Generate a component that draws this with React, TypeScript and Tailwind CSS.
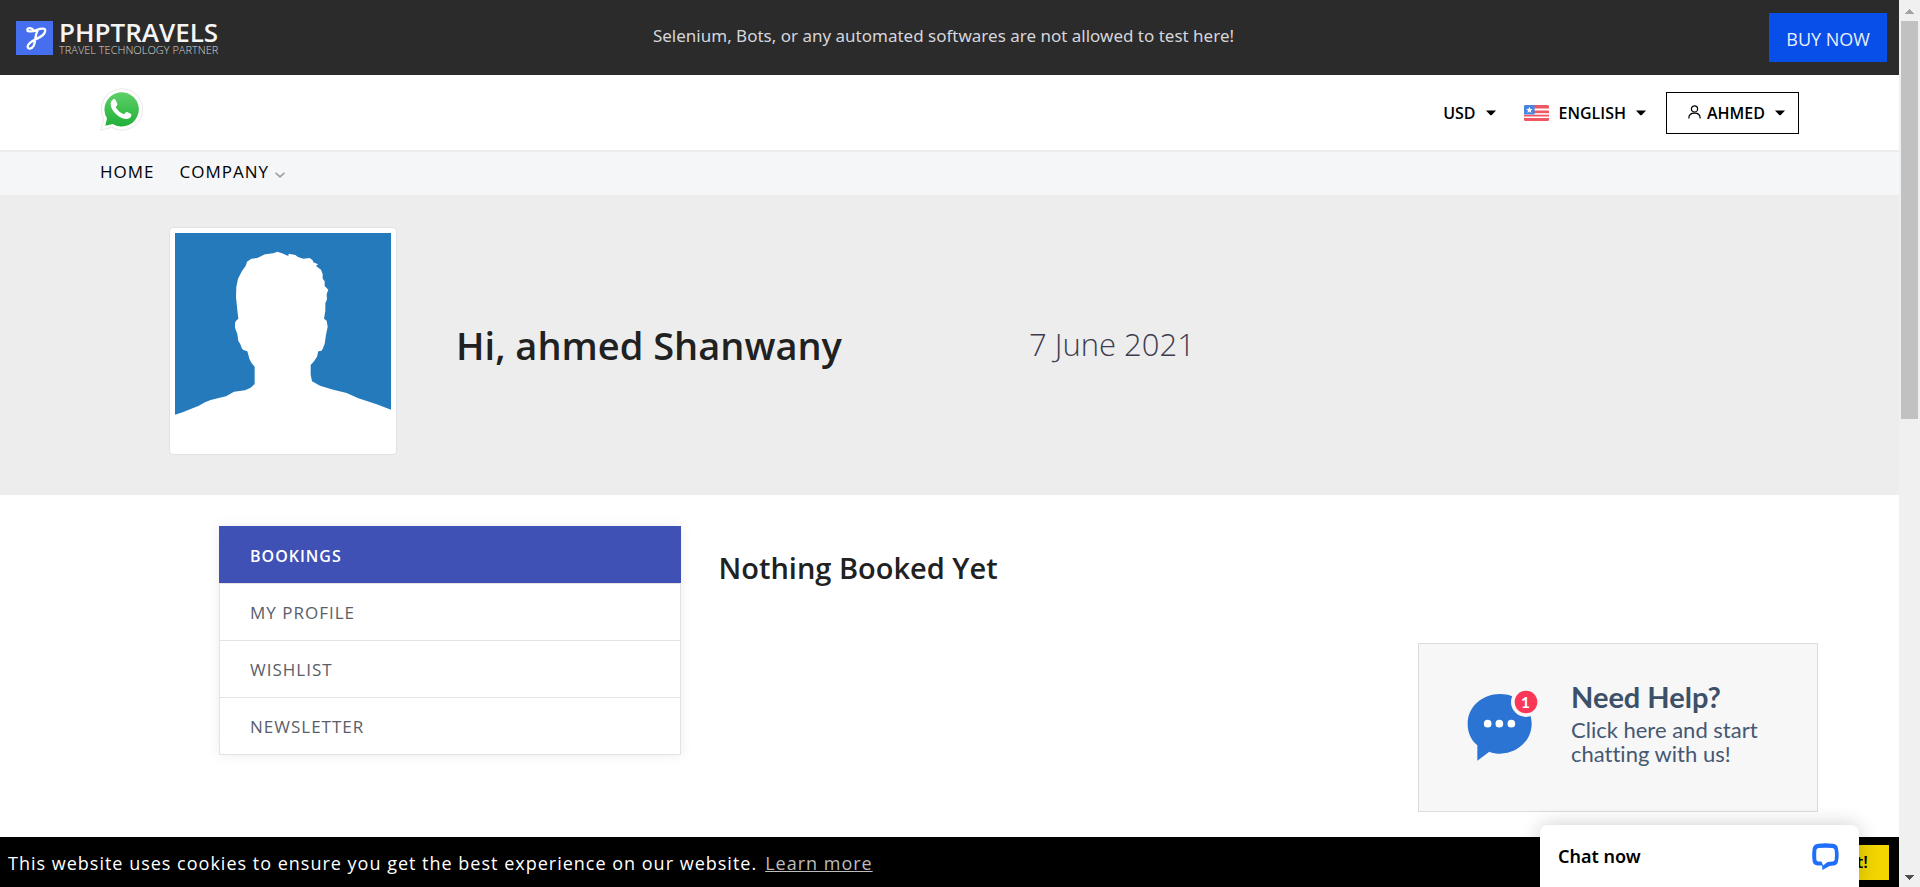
import React from "react";

function Caret() {
  return (
    <svg width="10" height="6" viewBox="0 0 10 6" className="shrink-0" aria-hidden="true">
      <path d="M0 0.4H10L5.8 4.9Q5 5.7 4.2 4.9Z" fill="currentColor" />
    </svg>
  );
}

function BrandMark() {
  return (
    <svg width="37" height="34" viewBox="0 0 37 34" className="shrink-0" aria-hidden="true">
      <rect width="37" height="34" fill="#466ff0" />
      <path
        d="M17.5 9.300C16 6.600 11.300 6.500 11.300 8.900C11.300 11.300 17 10.600 21 8.900C25 7.200 29.600 6.700 29.200 10C28.700 13.500 25 15.800 21 17.600C16 20 11.800 22.600 11.600 25.600C11.600 28.400 15.800 28.400 17.800 24.500C19.800 20 18.500 15 21.800 9"
        fill="none"
        stroke="#fff"
        strokeWidth="2.3"
        strokeLinecap="round"
        strokeLinejoin="round"
      />
    </svg>
  );
}

function WhatsAppLogo() {
  return (
    <svg width="43" height="43" viewBox="300 264 129 129" aria-hidden="true">
      <defs>
        <linearGradient id="wa" x1="0" y1="0" x2="0" y2="1">
          <stop offset="0" stopColor="#5fd068" />
          <stop offset="1" stopColor="#20b038" />
        </linearGradient>
      </defs>
      <path
        d="M302 391L311 357A62 62 0 1 1 335 382Z"
        fill="#fff"
        stroke="#e9e9e9"
        strokeWidth="3"
        strokeLinejoin="round"
      />
      <path d="M316 377L321 355A51.500 51.500 0 1 1 338 372Z" fill="url(#wa)" />
      <path
        d="M338 299C342 296 346 297 348 302L352 311C353 314 351 316 347 321C352 331 361 339 372 343C376 338 378 335 381 336L392 341C396 343 394 350 389 354C379 361 364 355 352 346C339 336 332 323 332 313C332 306 334 301 338 299Z"
        fill="#fff"
      />
    </svg>
  );
}

function UsFlag() {
  return (
    <svg width="25" height="16" viewBox="0 0 25 16" aria-hidden="true">
      <defs>
        <clipPath id="flag">
          <rect width="25" height="16" rx="1.500" />
        </clipPath>
      </defs>
      <g clipPath="url(#flag)">
        <rect width="25" height="16" fill="#fff" />
        <path d="M0 0H25V3.400H0ZM0 5.400H25V8H0ZM0 9.600H25V11.400H0ZM0 13H25V16H0Z" fill="#f05762" />
        <rect y="8" width="25" height="1.600" fill="#fbe3e5" />
        <rect width="10.600" height="9.400" fill="#4a86e0" />
        <path
          d="M5.400 1.700L6.300 4L8.600 4.100L6.800 5.600L7.400 7.900L5.400 6.600L3.400 7.900L4 5.600L2.200 4.100L4.500 4Z"
          fill="#fff"
        />
      </g>
    </svg>
  );
}

function UserIcon() {
  return (
    <svg width="13" height="14" viewBox="0 0 13 14" fill="none" stroke="currentColor" strokeWidth="1.200" className="mb-0.5" aria-hidden="true">
      <circle cx="6.500" cy="3.900" r="3.100" />
      <path d="M0.800 13.400C0.800 9.700 3.300 8.200 6.500 8.200C9.700 8.200 12.200 9.700 12.200 13.400" />
    </svg>
  );
}

function Avatar() {
  return (
    <svg viewBox="75 69 648 648" className="block w-full" role="img" aria-label="Profile photo">
      <rect x="75" y="69" width="648" height="648" fill="#257abc" />
      <path
        d="M75 614L100 606L122 597L145 588L165 577L182 570L206 564L228 559L252 545L285 541L302 533L314 522L314 470L304 458L298 446L295 434L292 424L282 421L276 416L271 403L265 393L262 372L255 353L255 338L260 330L265 327L262 300L258 262L259 230L264 206L276 183L287 168L291 155L304 146L322 144L345 133L370 130L382 125L396 130L415 138L416 131L436 135L444 141L460 146L479 144L488 151L490 157L504 163L498 168L513 179L518 192L518 206L524 214L524 228L535 239L530 252L531 268L526 280L526 302L522 326L530 332L533 350L528 374L524 402L518 416L515 422L505 424L501 440L492 454L482 465L482 494L486 514L510 527L550 539L590 549L625 565L680 583L723 599V717H75Z"
        fill="#fff"
      />
    </svg>
  );
}

function HelpBubble() {
  return (
    <svg width="71" height="71" viewBox="201 178 213 213" className="mb-1 shrink-0" aria-hidden="true">
      <path d="M232 344C211 326 203 303 203 279C203 228 247 190 300 190C354 190 395 228 395 279C395 331 350 369 300 369C289 369 278 367 268 363L232 390Z" fill="#2c74d3" />
      <circle cx="263" cy="279" r="11.500" fill="#fff" />
      <circle cx="298" cy="279" r="11.500" fill="#fff" />
      <circle cx="334" cy="279" r="11.500" fill="#fff" />
      <circle cx="378" cy="214" r="45" fill="#f7f7f7" />
      <circle cx="378" cy="214" r="34" fill="#fa3756" />
      <text x="376" y="231" fill="#fff" fontSize="46" fontWeight="700" fontFamily="Lato, sans-serif" textAnchor="middle">
        1
      </text>
    </svg>
  );
}

function LiveChatIcon() {
  return (
    <svg width="27" height="27" viewBox="1238 640 80 80" aria-hidden="true">
      <path
        fillRule="evenodd"
        fill="#1f6ffb"
        d="M1256 642Q1278 639 1300 642Q1314 644 1315 657Q1319 676 1315 695Q1313 706 1302 707L1290 708L1269 720L1268 707H1254Q1242 705 1240 695Q1237 676 1240 657Q1242 644 1256 642ZM1257 655Q1252 656 1251 661Q1250 676 1251 690Q1252 694 1257 695H1266L1271 707L1284 696L1299 695Q1304 694 1305 690Q1307 676 1305 661Q1304 656 1299 655Q1278 653 1257 655Z"
      />
    </svg>
  );
}

const accountLinks = ["BOOKINGS", "MY PROFILE", "WISHLIST", "NEWSLETTER"];

export default function App() {
  return (
    <div className="flex min-h-screen bg-white font-['Open_Sans',sans-serif] text-[#212121]">
      <div className="relative flex min-w-0 flex-1 flex-col">
        <div className="grid h-[75px] grid-cols-[1fr_auto_1fr] items-center bg-[#2b2b2b] pr-3 pl-4">
          <a href="#" className="flex items-center gap-[6px]">
            <BrandMark />
            <span className="flex flex-col">
              <span className="text-[26px] leading-6 font-semibold text-[#f5f5f5]">PHPTRAVELS</span>
              <span className="text-[11px] leading-3 font-light text-[#d4d4d4]">TRAVEL TECHNOLOGY PARTNER</span>
            </span>
          </a>
          <p className="pr-4 pb-1 font-['Noto_Sans',sans-serif] text-[17px] leading-6 text-[#d5d5dc]">
            Selenium, Bots, or any automated softwares are not allowed to test here!
          </p>
          <button type="button" className="flex h-[49px] items-center justify-self-end bg-[#084ee8] px-[17px] pt-1 text-[18px] text-[#e9effd]">
            BUY NOW
          </button>
        </div>

        <header className="flex h-[75px] items-center justify-between px-[100px]">
          <a href="#" aria-label="WhatsApp" className="pb-1.5">
            <WhatsAppLogo />
          </a>
          <div className="flex items-center text-[16px] font-semibold text-black">
            <button type="button" aria-haspopup="true" className="mr-7 flex items-center gap-[10px]">
              USD <Caret />
            </button>
            <button type="button" aria-haspopup="true" className="mr-5 flex items-center gap-[10px]">
              <UsFlag /> ENGLISH <Caret />
            </button>
            <button type="button" aria-haspopup="true" className="flex h-[42px] items-center border border-black pr-[13px] pl-[21px]">
              <UserIcon />
              <span className="mr-[10px] ml-1.5">AHMED</span>
              <Caret />
            </button>
          </div>
        </header>

        <nav className="flex h-[45px] items-center gap-[25px] border-t-2 border-[#ececec] bg-[#f4f6f8] px-[100px] pb-[3px] text-[17px] tracking-[1px] text-black">
          <a href="#">HOME</a>
          <a href="#" className="flex items-center gap-1.5">
            COMPANY
            <svg width="10" height="6" viewBox="0 0 10 6" className="mt-1.5" fill="none" stroke="#9a9a9a" strokeWidth="1.500" aria-hidden="true">
              <path d="M0.500 0.700L5 4.900L9.500 0.700" />
            </svg>
          </a>
        </nav>

        <section className="grid h-[300px] grid-cols-[228px_11fr_15fr] items-center gap-[59px] bg-[#ededed] px-[169px]">
          <div className="mb-2 rounded-[4px] border border-[#dee2e6] bg-white p-[5px]">
            <Avatar />
          </div>
          <h1 className="text-[38px] leading-10 font-semibold whitespace-nowrap">Hi, ahmed Shanwany</h1>
          <p className="pb-0.5 text-[31px] leading-10 font-light whitespace-nowrap text-[#3c3c4e]">7 June 2021</p>
        </section>

        <main className="grid grid-cols-[12fr_25fr] items-start gap-[38px] px-[219px] pt-[31px]">
          <ul className="border border-[#e3e3e3] shadow-[0_0_12px_rgba(0,0,0,0.08)]">
            {accountLinks.map((label, i) => (
              <li key={label}>
                <a
                  href="#"
                  className={
                    i === 0
                      ? "-mx-px -mt-px flex h-[57px] items-center bg-[#3f51b5] px-[31px] pt-0.5 text-[16px] font-semibold tracking-[1px] text-white"
                      : "flex h-[57px] items-center border-t border-[#e3e3e3] px-[30px] pt-0.5 text-[17px] tracking-[1px] text-[#5a5e6a]"
                  }
                >
                  {label}
                </a>
              </li>
            ))}
          </ul>
          <h2 className="pt-[22px] text-[29px] leading-10 font-semibold">Nothing Booked Yet</h2>
        </main>

        <footer className="mt-auto flex h-[50px] items-center justify-between bg-black pr-[10px] pl-2 text-[18px] text-white">
          <p className="pt-0.5 tracking-[1px]">
            This website uses cookies to ensure you get the best experience on our website.
            <a href="#" className="ml-2 text-[#bdbdbd] underline">
              Learn more
            </a>
          </p>
          <button type="button" className="h-[35px] bg-[#f1d600] px-[21px] text-[17px] font-semibold text-black">
            Got it!
          </button>
        </footer>

        <a
          href="#"
          className="absolute right-[81px] bottom-[75px] flex h-[169px] w-[400px] items-center border border-[#dcdcdc] bg-[#f7f7f7] pl-12 font-[Lato,sans-serif] text-[#455872]"
        >
          <HelpBubble />
          <span className="ml-[33px] flex flex-col gap-[3px] pb-[11px]">
            <strong className="text-[29px] leading-9 text-[#3c5068]">Need Help?</strong>
            <span className="text-[22px] leading-6 [font-variant-ligatures:none]">
              Click here and start
              <br />
              chatting with us!
            </span>
          </span>
        </a>

        <button
          type="button"
          className="absolute right-10 bottom-0 flex h-[62px] w-[319px] items-center justify-between rounded-t-lg bg-white pr-5 pl-[18px] font-['Noto_Sans',sans-serif] text-[18px] font-semibold text-black shadow-[0_0_20px_rgba(0,0,0,0.2)]"
        >
          Chat now
          <LiveChatIcon />
        </button>
      </div>

      <div className="sticky top-0 flex h-screen w-[21px] shrink-0 flex-col items-center bg-[#f0f0f0]" aria-hidden="true">
        <svg width="9" height="21" viewBox="0 0 9 21" shapeRendering="crispEdges">
          <path d="M0 14L4.500 9L9 14Z" fill="#a3a3a3" />
        </svg>
        <div className="h-[398px] w-[17px] bg-[#c1c1c1]" />
        <svg width="9" height="21" viewBox="0 0 9 21" className="mt-auto" shapeRendering="crispEdges">
          <path d="M0 9L4.500 14L9 9Z" fill="#505050" />
        </svg>
      </div>
    </div>
  );
}
